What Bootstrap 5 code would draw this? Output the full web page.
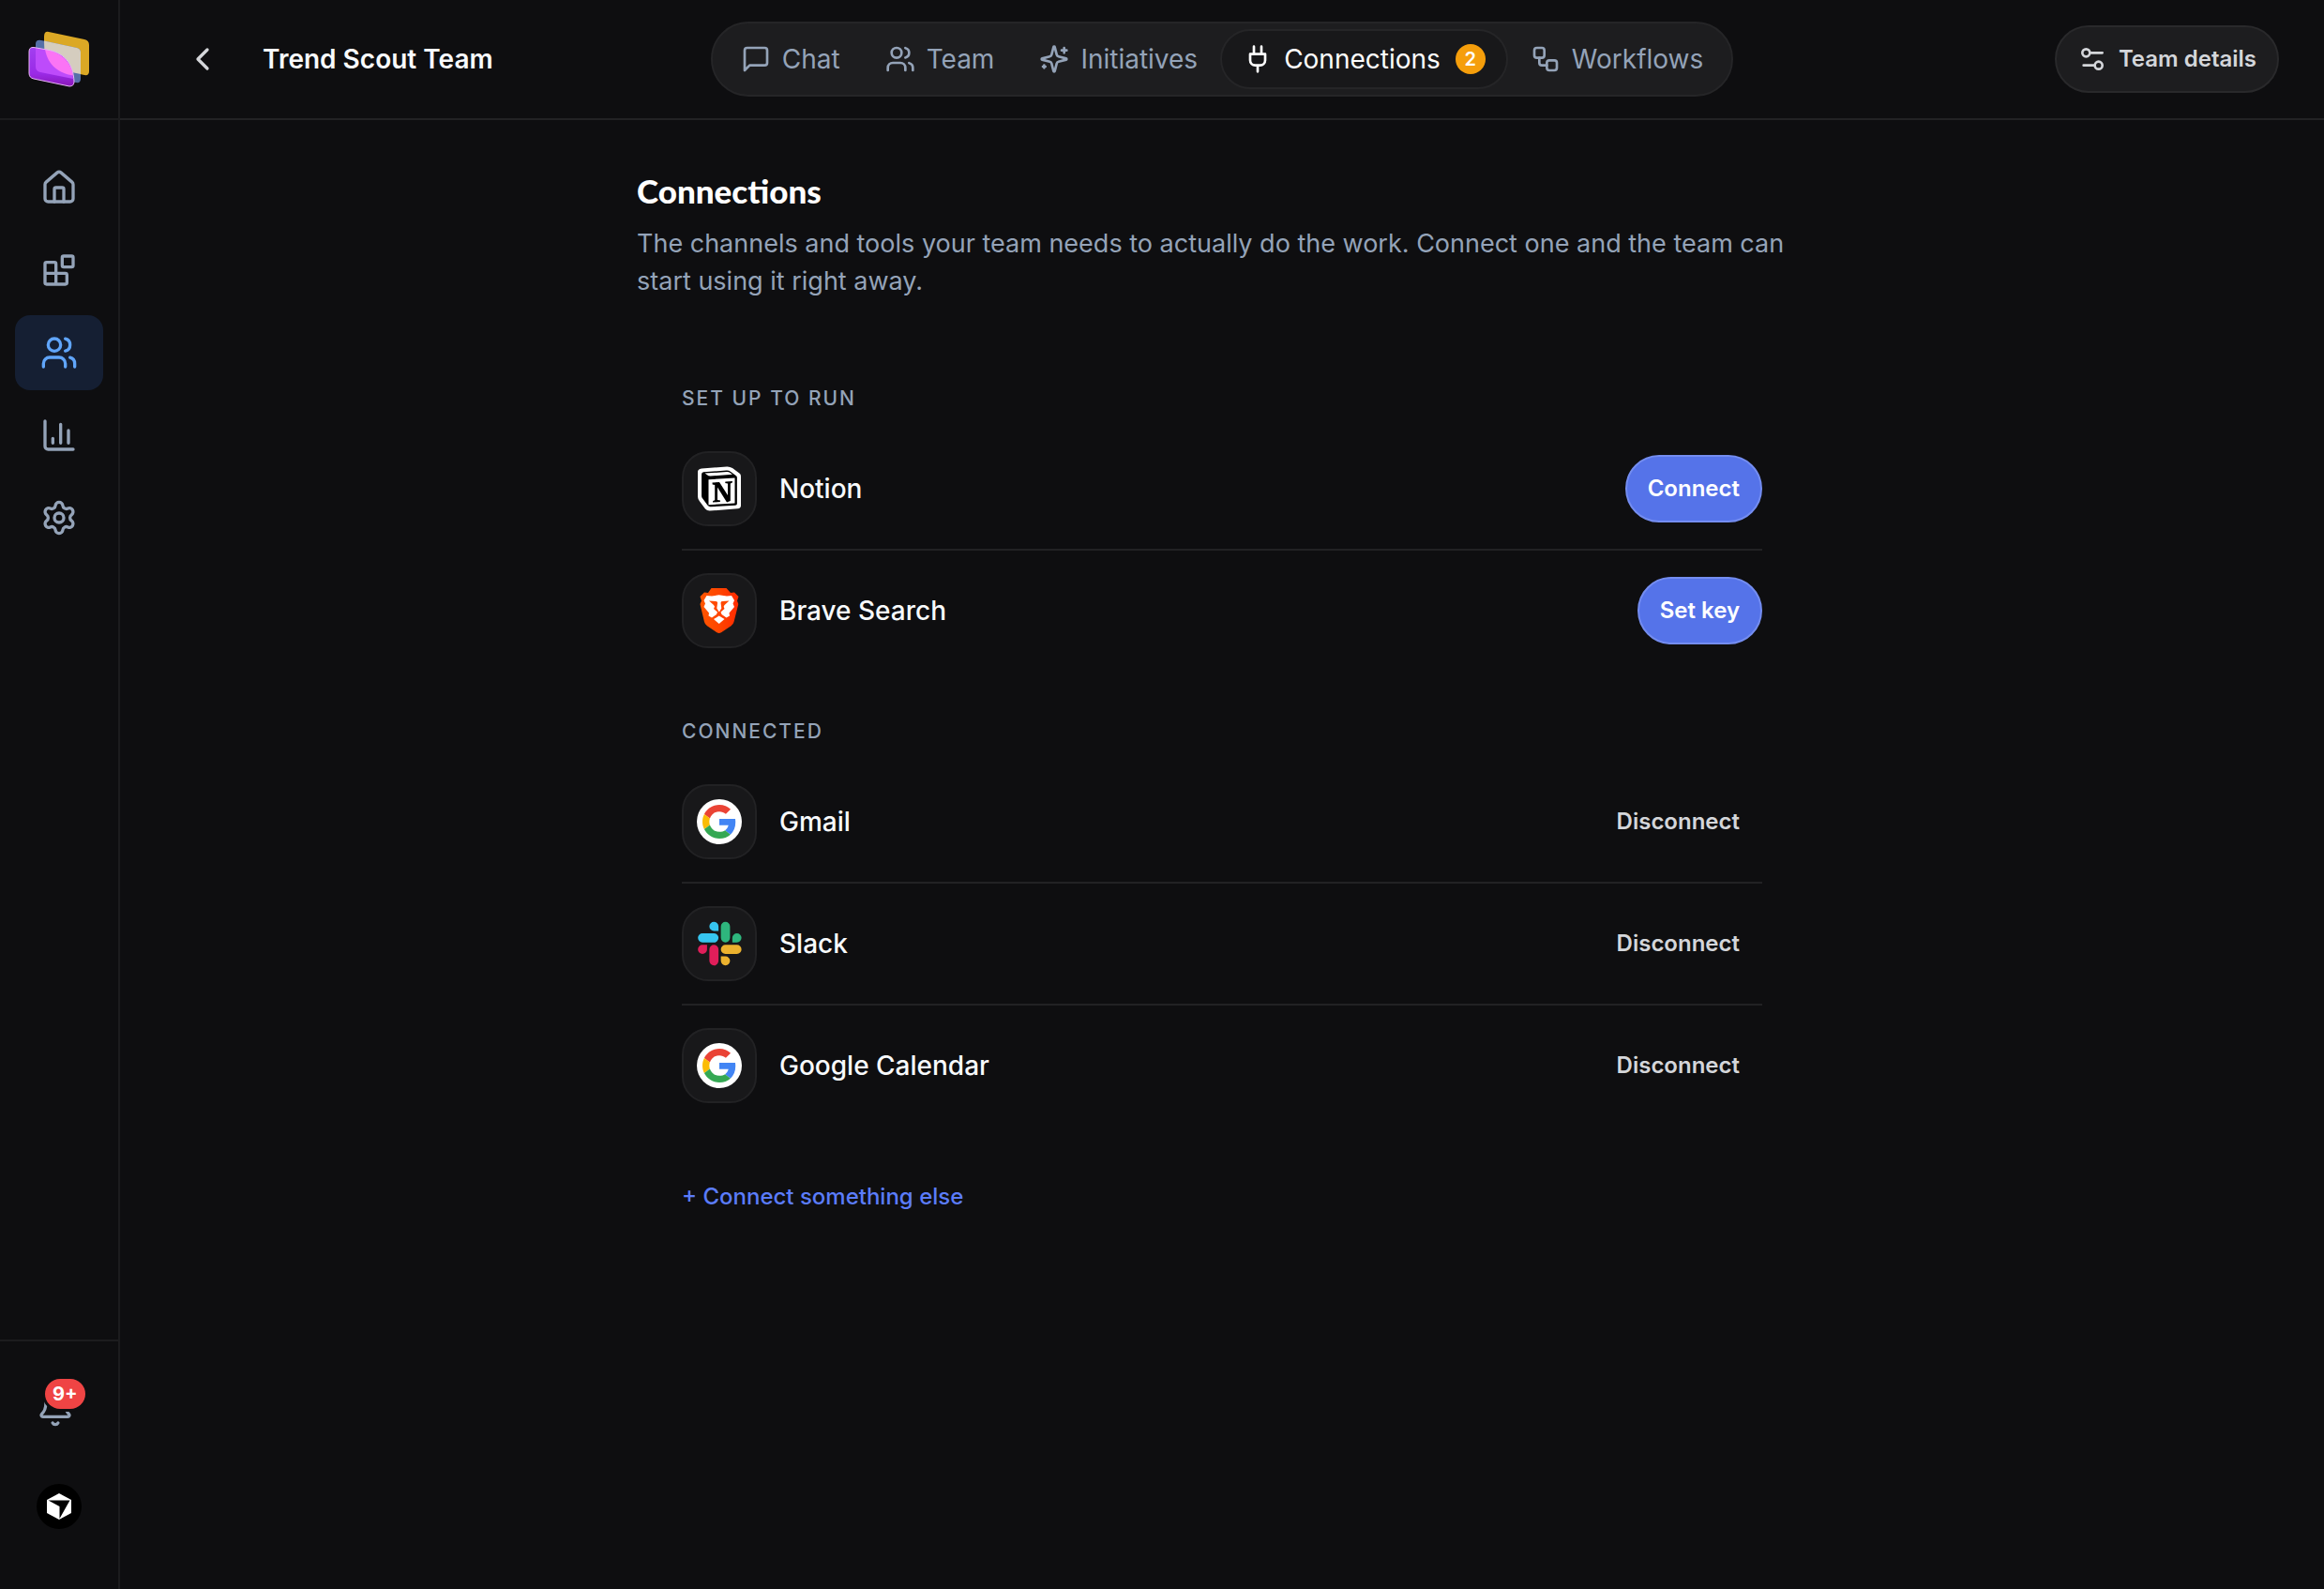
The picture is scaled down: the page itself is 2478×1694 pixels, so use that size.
<!DOCTYPE html>
<html lang="en" data-bs-theme="dark">
<head>
<meta charset="utf-8">
<meta name="viewport" content="width=device-width, initial-scale=1">
<title>Trend Scout Team – Connections</title>
<link href="https://cdn.jsdelivr.net/npm/bootstrap@5.3.0/dist/css/bootstrap.min.css" rel="stylesheet">
<style>
  :root { --canvas: #0e0e10; --line: #222224; --panel: #1d1d1f; --tile: #18181a; --muted: #94a3b8; --soft: #d4d6da; --bright: #f8fafc; }
  body { background: var(--canvas); color: var(--bright); font-family: Inter, "Liberation Sans", sans-serif; font-size: 28px; line-height: 40px; }
  .ico { width: 32px; height: 32px; fill: none; stroke: currentColor; stroke-width: 2; stroke-linecap: round; stroke-linejoin: round; flex: none; }
  .ico-lg { width: 40px; height: 40px; }
  .rail { width: 128px; border-right: 2px solid #1c1c1e; }
  .rail-logo, .topbar { height: 128px; border-bottom: 2px solid var(--line); }
  .rail-logo { border-color: #1c1c1e; }
  .rail-nav { padding: 32px 16px; gap: 8px; }
  .rail-nav .nav-link, .rail-btn { height: 80px; border-radius: 16px; color: var(--muted); padding: 0; }
  .rail-nav .nav-link.active { background: #151f33; color: #60a5fa; }
  .rail-foot { border-top: 2px solid #1c1c1e; padding: 32px 16px 48px; gap: 24px; }
  .alert-count { top: 8px; left: 32px; height: 32px; line-height: 32px; padding: 0 8px; background: #ef4444; font-size: 20px; font-weight: 700; box-shadow: 0 0 0 3px var(--canvas); }
  .avatar { width: 48px; height: 48px; background: #000; }
  .topbar { padding: 0 48px; }
  .side-cell { flex: 1 1 0; }
  .back { width: 48px; height: 48px; color: var(--soft); margin-left: 16px; }
  .team-name { font-size: 28px; line-height: 40px; font-weight: 600; margin-left: 40px; }
  .tabs { background: var(--panel); border: 2px solid #252527; border-radius: 40px; padding: 6px; }
  .tabs .nav-link { height: 64px; border: 2px solid transparent; border-radius: 32px; padding: 0 22px; gap: 12px; color: var(--muted); }
  .tabs .nav-link.active { background: var(--tile); border-color: #252527; color: #fff; }
  .tab-count { width: 32px; height: 32px; background: #f59e0b; font-size: 20px; font-weight: 600; line-height: 32px; margin-left: 4px; }
  .btn { font-size: 24px; line-height: 36px; font-weight: 600; --bs-btn-padding-y: 16px; --bs-btn-padding-x: 22px; border-width: 2px; border-radius: 36px; }
  .btn-panel { background: var(--panel); border-color: #29292b; color: var(--soft); gap: 12px; }
  .btn-blue { background: #5573e9; border-color: #748df0; color: #fff; }
  .btn-quiet { color: var(--soft); border-color: transparent; }
  .page { width: 100%; max-width: 1248px; padding: 48px 0; }
  .page-title { font-family: Lato, Inter, sans-serif; font-weight: 900; font-size: 35px; line-height: 54px; margin-bottom: 10px; }
  .page-intro { font-size: 27px; color: var(--muted); margin-bottom: 88px; }
  .sections { padding: 0 48px; }
  .group-label { font-size: 21px; line-height: 33px; font-weight: 500; color: var(--muted); letter-spacing: 2px; margin-bottom: 16px; }
  .tools { margin-bottom: 48px; }
  .tools .list-group-item { background: none; border: 0; border-bottom: 2px solid var(--line); padding: 24px 0; gap: 24px; }
  .tools .list-group-item:last-child { border-bottom: 0; }
  .tool-tile { width: 80px; height: 80px; border-radius: 28px; background: var(--tile); border: 2px solid #222224; }
  .tool-tile svg { width: 48px; height: 48px; }
  .tool-name { font-size: 28px; line-height: 40px; font-weight: 500; color: var(--bright); }
  .more-link { font-size: 24px; font-weight: 500; color: #5b7cfa; }
</style>
</head>
<body>
<svg class="d-none" aria-hidden="true">
  <symbol id="users" viewBox="0 0 24 24"><path d="M16 21v-2a4 4 0 0 0-4-4H6a4 4 0 0 0-4 4v2M22 21v-2a4 4 0 0 0-3-3.87M16 3.13a4 4 0 0 1 0 7.75"/><circle cx="9" cy="7" r="4"/></symbol>
  <symbol id="google" viewBox="0 0 48 48"><circle cx="24" cy="24" r="24" fill="#fff"/><g transform="translate(6 6) scale(.75)"><path fill="#EA4335" d="M24 9.5c3.54 0 6.71 1.22 9.21 3.6l6.85-6.85C35.9 2.38 30.47 0 24 0 14.62 0 6.51 5.38 2.56 13.22l7.98 6.19C12.43 13.72 17.74 9.5 24 9.5z"/><path fill="#4285F4" d="M46.98 24.55c0-1.57-.15-3.09-.38-4.55H24v9.02h12.94c-.58 2.96-2.26 5.48-4.78 7.18l7.73 6c4.51-4.18 7.09-10.36 7.09-17.65z"/><path fill="#FBBC05" d="M10.53 28.59c-.48-1.45-.76-2.99-.76-4.59s.27-3.14.76-4.59l-7.98-6.19C.92 16.46 0 20.12 0 24c0 3.88.92 7.54 2.56 10.78l7.97-6.19z"/><path fill="#34A853" d="M24 48c6.48 0 11.93-2.13 15.89-5.81l-7.73-6c-2.15 1.45-4.92 2.3-8.16 2.3-6.26 0-11.57-4.22-13.47-9.91l-7.98 6.19C6.51 42.62 14.62 48 24 48z"/></g></symbol>
</svg>

<div class="d-flex min-vh-100">
  <aside class="rail d-flex flex-column flex-shrink-0">
    <a href="#" class="rail-logo d-flex align-items-center justify-content-center" aria-label="Workspace">
      <svg width="66" height="60" viewBox="0 0 66 60">
        <defs><linearGradient id="lg" x1="0" y1="0" x2="0" y2="1"><stop offset="0" stop-color="#a23ff0"/><stop offset=".68" stop-color="#9a2ae6"/><stop offset="1" stop-color="#8a18b8"/></linearGradient></defs>
        <path fill="#dba825" d="M22 1 60 9q5 1 5 6v28q0 5-5 4l-38-8q-5-1-5-6V6q0-6 5-5z"/>
        <path fill="#566fa8" d="M14 10l38 8q4 1 4 5v28q0 5-5 4l-38-8q-5-1-5-6V14q0-5 6-4z"/>
        <path fill="#d5cdbf" d="M17 10.600 52 18q4 1 4 5v23l-34-7q-5-9-5-28.400z"/>
        <path fill="url(#lg)" d="M6 17.500 20 20c17 3 28 13 29 34q0 5-5 5L6 51q-5-1-5-6V22q0-5 5-4.500z"/>
        <path fill="#bd4bfb" d="M8 18l12 2c15 3 26 12 28 31L13 44q-5-1-5-6z"/>
        <path fill="#fb74f5" d="M18 19.500c15 3 27 11 30 28-14-2-27-10-30-28z"/>
        <path fill="none" stroke="#e9b6f7" stroke-width="1" d="M6 17.500 20 20c17 3 28 13 29 34q0 5-5 5L6 51q-5-1-5-6V22q0-5 5-4.500z"/>
      </svg>
    </a>
    <nav class="rail-nav nav nav-pills flex-column flex-nowrap flex-grow-1" aria-label="Main">
      <a class="nav-link d-flex align-items-center justify-content-center" href="#" aria-label="Home"><svg class="ico ico-lg" viewBox="0 0 24 24"><path d="M15 21v-8a1 1 0 0 0-1-1h-4a1 1 0 0 0-1 1v8"/><path d="M3 10a2 2 0 0 1 .709-1.528l7-6a2 2 0 0 1 2.582 0l7 6A2 2 0 0 1 21 10v9a2 2 0 0 1-2 2H5a2 2 0 0 1-2-2z"/></svg></a>
      <a class="nav-link d-flex align-items-center justify-content-center" href="#" aria-label="Apps"><svg class="ico ico-lg" viewBox="0 0 24 24"><rect x="14" y="3" width="7" height="7" rx="1"/><path d="M10 21V8a1 1 0 0 0-1-1H4a1 1 0 0 0-1 1v12a1 1 0 0 0 1 1h12a1 1 0 0 0 1-1v-5a1 1 0 0 0-1-1H3"/></svg></a>
      <a class="nav-link active d-flex align-items-center justify-content-center" href="#" aria-label="Teams" aria-current="page"><svg class="ico ico-lg"><use href="#users"/></svg></a>
      <a class="nav-link d-flex align-items-center justify-content-center" href="#" aria-label="Analytics"><svg class="ico ico-lg" viewBox="0 0 24 24"><path d="M3 3v16a2 2 0 0 0 2 2h16M13 17V5M18 17V9M8 17v-3"/></svg></a>
      <a class="nav-link d-flex align-items-center justify-content-center" href="#" aria-label="Settings"><svg class="ico ico-lg" viewBox="0 0 24 24"><path d="M9.671 4.136a2.340 2.340 0 0 1 4.659 0 2.340 2.340 0 0 0 3.319 1.915 2.340 2.340 0 0 1 2.330 4.033 2.340 2.340 0 0 0 0 3.831 2.340 2.340 0 0 1-2.330 4.033 2.340 2.340 0 0 0-3.319 1.915 2.340 2.340 0 0 1-4.659 0 2.340 2.340 0 0 0-3.320-1.915 2.340 2.340 0 0 1-2.330-4.033 2.340 2.340 0 0 0 0-3.831A2.340 2.340 0 0 1 6.350 6.051a2.340 2.340 0 0 0 3.319-1.915"/><circle cx="12" cy="12" r="3"/></svg></a>
    </nav>
    <div class="rail-foot d-flex flex-column">
      <button type="button" class="rail-btn border-0 bg-transparent position-relative d-flex align-items-center justify-content-center pe-2" aria-label="Notifications">
        <svg class="ico ico-lg" viewBox="0 0 24 24"><path d="M10.268 21a2 2 0 0 0 3.464 0"/><path d="M3.262 15.326A1 1 0 0 0 4 17h16a1 1 0 0 0 .740-1.673C19.410 13.956 18 12.499 18 8A6 6 0 0 0 6 8c0 4.499-1.411 5.956-2.738 7.326"/></svg>
        <span class="alert-count position-absolute rounded-pill text-white">9+</span>
      </button>
      <button type="button" class="rail-btn border-0 bg-transparent d-flex align-items-center justify-content-center" aria-label="Account">
        <span class="avatar rounded-circle d-flex align-items-center justify-content-center"><svg width="26" height="28" viewBox="0 0 26 28"><path fill="#fff" d="M13 0 26 7v14l-13 7L0 21V7z"/><path fill="#000" d="M1.500 7.500h23L13.500 27V14z"/></svg></span>
      </button>
    </div>
  </aside>

  <div class="flex-grow-1 d-flex flex-column">
    <header class="topbar d-flex align-items-center">
      <div class="side-cell d-flex align-items-center">
        <button type="button" class="back border-0 bg-transparent p-0 d-flex align-items-center justify-content-center" aria-label="Back"><svg class="ico ico-lg" viewBox="0 0 24 24"><path d="m15 18-6-6 6-6"/></svg></button>
        <span class="team-name">Trend Scout Team</span>
      </div>
      <nav class="tabs nav nav-pills flex-nowrap" aria-label="Team sections">
        <a class="nav-link d-flex align-items-center" href="#"><svg class="ico" viewBox="0 0 24 24"><path d="M21 15a2 2 0 0 1-2 2H7l-4 4V5a2 2 0 0 1 2-2h14a2 2 0 0 1 2 2z"/></svg>Chat</a>
        <a class="nav-link d-flex align-items-center" href="#"><svg class="ico"><use href="#users"/></svg>Team</a>
        <a class="nav-link d-flex align-items-center" href="#"><svg class="ico" viewBox="0 0 24 24"><path d="M9.937 15.500A2 2 0 0 0 8.500 14.063l-6.135-1.582a.5.5 0 0 1 0-.962L8.500 9.936A2 2 0 0 0 9.937 8.500l1.582-6.135a.5.5 0 0 1 .963 0L14.063 8.500A2 2 0 0 0 15.500 9.937l6.135 1.581a.5.5 0 0 1 0 .964L15.500 14.063a2 2 0 0 0-1.437 1.437l-1.582 6.135a.5.5 0 0 1-.963 0zM20 3v4M22 5h-4M4 17v2M5 18H3"/></svg>Initiatives</a>
        <a class="nav-link active d-flex align-items-center" href="#" aria-current="page"><svg class="ico" viewBox="0 0 24 24"><path d="M12 22v-5M9 8V2M15 8V2M18 8v5a4 4 0 0 1-4 4h-4a4 4 0 0 1-4-4V8z"/></svg>Connections<span class="tab-count rounded-circle text-center text-white">2</span></a>
        <a class="nav-link d-flex align-items-center" href="#"><svg class="ico" viewBox="0 0 24 24"><rect x="3" y="3" width="8" height="8" rx="2"/><path d="M7 11v4a2 2 0 0 0 2 2h4"/><rect x="13" y="13" width="8" height="8" rx="2"/></svg>Workflows</a>
      </nav>
      <div class="side-cell d-flex justify-content-end">
        <button type="button" class="btn btn-panel d-flex align-items-center"><svg class="ico" viewBox="0 0 24 24"><path d="M20 7h-9M14 17H5"/><circle cx="17" cy="17" r="3"/><circle cx="7" cy="7" r="3"/></svg>Team details</button>
      </div>
    </header>

    <main class="page mx-auto">
      <h1 class="page-title">Connections</h1>
      <p class="page-intro">The channels and tools your team needs to actually do the work. Connect one and the team can start using it right away.</p>
      <div class="sections">
        <h2 class="group-label text-uppercase">Set up to run</h2>
        <ul class="tools list-group list-group-flush">
          <li class="list-group-item d-flex align-items-center">
            <span class="tool-tile d-flex align-items-center justify-content-center"><svg viewBox="0 0 48 48"><path fill="#fff" d="M5 2.500 32 .5q3-.2 6 1.500l8 6q1 .8 1 3v31q0 3-3.500 3.300L14 47.500q-3 .2-5-2l-6-8q-2-2.500-2-5V6q0-3 4-3.500z"/><path fill="#000" transform="translate(1.500 1.200) scale(.94)" d="M6 5.500 32 3.500q2.500-.2 5 1.500l6 4.500q1 .8 1 2v30q0 1.500-2 1.700L14 44.800q-2 .1-3.500-1.800L5 35.500q-1.200-1.500-1.200-3V8q0-2.300 2.200-2.500z"/><path fill="#fff" d="M8.500 7.600 32 6q2-.1 3.500 1L38 8.800 14.500 10.500q-2 .1-3.500-1.200z"/><path fill="#fff" d="M12.500 14.200 40.500 12.500V39.500L12.500 41.200z"/><path fill="#000" d="M16.500 17.500 24 17l9 14V18.600l-2.800-.5.2-1.500 7.600-.5-.2 1.500-2 .8V37l-3.800 1.500L22 22.500V36l3 .6-.2 1.500-7.800.5.2-1.600 2-.7V20l-2.500-.5z"/></svg></span>
            <span class="tool-name flex-grow-1">Notion</span>
            <button type="button" class="btn btn-blue">Connect</button>
          </li>
          <li class="list-group-item d-flex align-items-center">
            <span class="tool-tile d-flex align-items-center justify-content-center"><svg viewBox="0 0 48 48"><defs><linearGradient id="bv"><stop offset="0" stop-color="#ff5601"/><stop offset=".5" stop-color="#ff4500"/><stop offset="1" stop-color="#ff2a00"/></linearGradient></defs><path fill="url(#bv)" d="M15.500 0h16l4.500 5 4-.5L44.500 9 43 13.500l1.300 3.500-4.800 19q-.6 2.500-3 4.200L26 47.300q-2.300 1.400-4.600 0L11 40.200q-2.400-1.700-3-4.200L3.500 17 5 13.500 3.500 9 8 4.500l4 .5z"/><path fill="#fff" d="M16 8.500 23.500 7.200 32 8.500 37 8l3 5-1.500 3.500L40 20l-5.500 6.500.5 3-3.500 2-5-3.500-1-2.500 4-3.500-1.500-3.500L31 15l-4.500-1-1 1.500.8 6-2.500 4-2.500-4 .8-6-1-1.500L16.500 15l3 3.500L18 22l4 3.500-1 2.500-5 3.500-3.500-2 .5-3L7.500 20 9 16.500 7.500 13l3-5z"/><path fill="#ff4a00" d="M13 13.500l7 .500 1 2-1 5.500-2-3.500zM34.500 13.500l-7 .500-1 2 1 5.500 2-3.500z"/><path fill="#fff" d="M23.700 29.500 29.500 33l-5.800 5L18 33z"/></svg></span>
            <span class="tool-name flex-grow-1">Brave Search</span>
            <button type="button" class="btn btn-blue">Set key</button>
          </li>
        </ul>
        <h2 class="group-label text-uppercase">Connected</h2>
        <ul class="tools list-group list-group-flush">
          <li class="list-group-item d-flex align-items-center">
            <span class="tool-tile d-flex align-items-center justify-content-center"><svg><use href="#google"/></svg></span>
            <span class="tool-name flex-grow-1">Gmail</span>
            <button type="button" class="btn btn-quiet">Disconnect</button>
          </li>
          <li class="list-group-item d-flex align-items-center">
            <span class="tool-tile d-flex align-items-center justify-content-center"><svg viewBox="-.6 -.4 24.800 24.800"><path fill="#E01E5A" d="M5.042 15.165a2.528 2.528 0 0 1-2.520 2.523A2.528 2.528 0 0 1 0 15.165a2.527 2.527 0 0 1 2.522-2.520h2.520v2.520zM6.313 15.165a2.527 2.527 0 0 1 2.521-2.520 2.527 2.527 0 0 1 2.521 2.520v6.313A2.528 2.528 0 0 1 8.834 24a2.528 2.528 0 0 1-2.521-2.522v-6.313z"/><path fill="#36C5F0" d="M8.834 5.042a2.528 2.528 0 0 1-2.521-2.520A2.528 2.528 0 0 1 8.834 0a2.528 2.528 0 0 1 2.521 2.522v2.520H8.834zM8.834 6.313a2.528 2.528 0 0 1 2.521 2.521 2.528 2.528 0 0 1-2.521 2.521H2.522A2.528 2.528 0 0 1 0 8.834a2.528 2.528 0 0 1 2.522-2.521h6.312z"/><path fill="#2EB67D" d="M18.956 8.834a2.528 2.528 0 0 1 2.522-2.521A2.528 2.528 0 0 1 24 8.834a2.528 2.528 0 0 1-2.522 2.521h-2.522V8.834zM17.688 8.834a2.528 2.528 0 0 1-2.523 2.521 2.527 2.527 0 0 1-2.520-2.521V2.522A2.527 2.527 0 0 1 15.165 0a2.528 2.528 0 0 1 2.523 2.522v6.312z"/><path fill="#ECB22E" d="M15.165 18.956a2.528 2.528 0 0 1 2.523 2.522A2.528 2.528 0 0 1 15.165 24a2.527 2.527 0 0 1-2.520-2.522v-2.522h2.520zM15.165 17.688a2.527 2.527 0 0 1-2.520-2.523 2.526 2.526 0 0 1 2.520-2.520h6.313A2.527 2.527 0 0 1 24 15.165a2.528 2.528 0 0 1-2.522 2.523h-6.313z"/></svg></span>
            <span class="tool-name flex-grow-1">Slack</span>
            <button type="button" class="btn btn-quiet">Disconnect</button>
          </li>
          <li class="list-group-item d-flex align-items-center">
            <span class="tool-tile d-flex align-items-center justify-content-center"><svg><use href="#google"/></svg></span>
            <span class="tool-name flex-grow-1">Google Calendar</span>
            <button type="button" class="btn btn-quiet">Disconnect</button>
          </li>
        </ul>
        <a href="#" class="more-link d-inline-block text-decoration-none mt-2">+ Connect something else</a>
      </div>
    </main>
  </div>
</div>
<script src="https://cdn.jsdelivr.net/npm/bootstrap@5.3.0/dist/js/bootstrap.bundle.min.js"></script>
</body>
</html>
